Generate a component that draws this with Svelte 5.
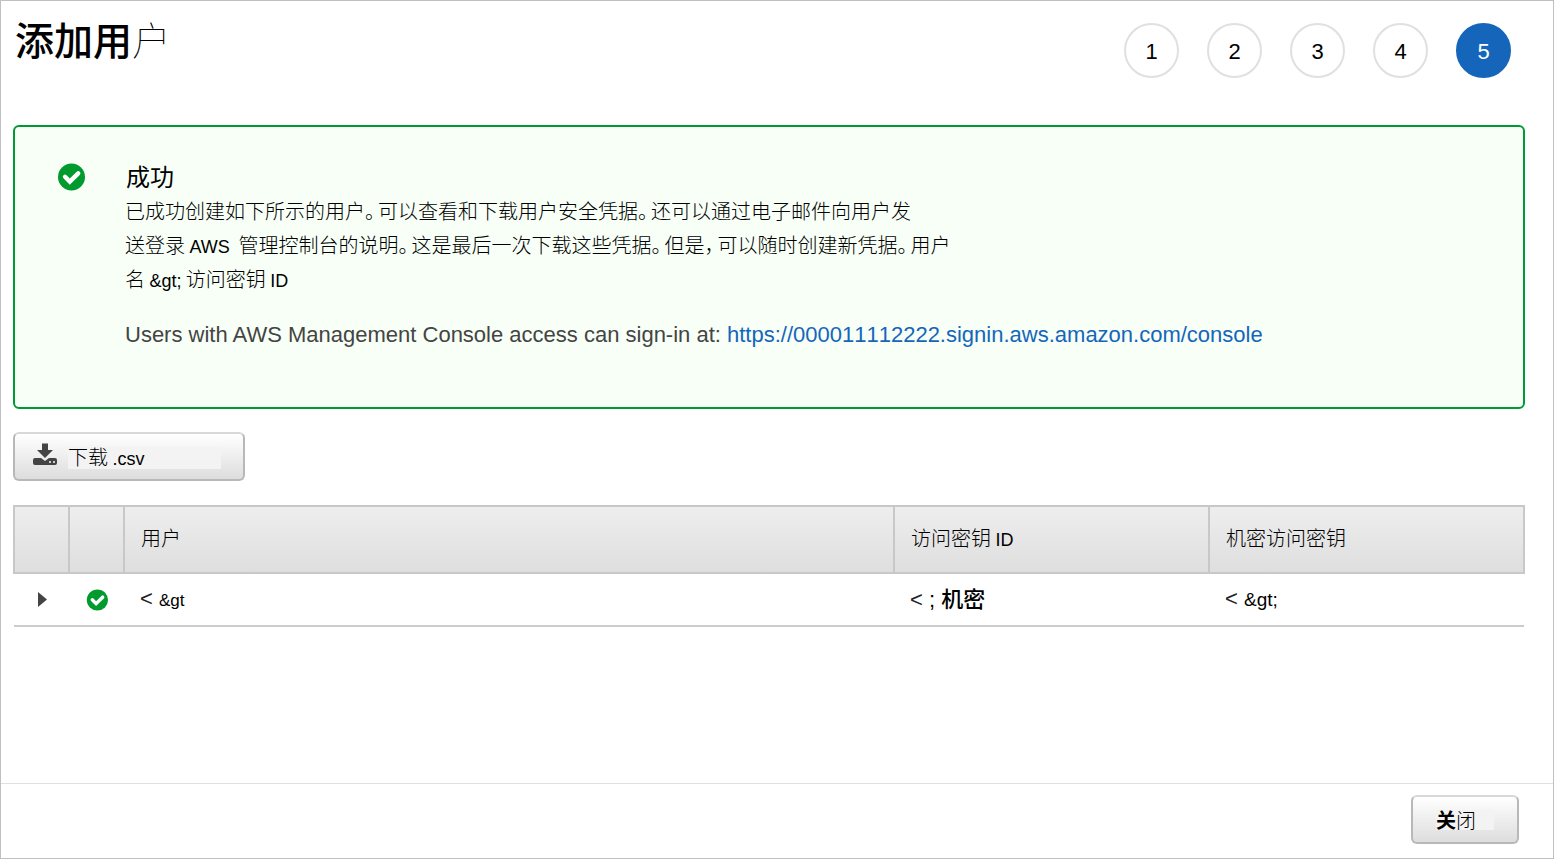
<script>
	const steps = [1, 2, 3, 4, 5];
	let current = 5;
	let open = false;
</script>

{#snippet check()}
	<svg class="check" viewBox="0 0 28 28" aria-hidden="true">
		<circle cx="14.5" cy="14" r="13.5" fill="#009a2e" />
		<path d="M8 13.8 L12.8 18.6 L21.2 10.4" fill="none" stroke="#fff" stroke-width="4.4" stroke-linecap="round" />
	</svg>
{/snippet}

<div class="page">
	<main>
		<header>
			<h1>添加用<span class="thin">户</span></h1>
			<ol class="steps">
				{#each steps as step}
					<li class:active={step === current}>{step}</li>
				{/each}
			</ol>
		</header>

		<section class="alert">
			{@render check()}
			<div class="message">
				<h2>成功</h2>
				<p class="cjk">
					已成功创建如下所示的用户<span class="mark">。</span>可以查看和下载用户安全凭据<span class="mark">。</span>还可以通过电子邮件向用户发<br />
					送登录 <span class="latin">AWS</span>&nbsp; 管理控制台的说明<span class="mark">。</span>这是最后一次下载这些凭据<span class="mark">。</span>但是<span class="mark">，</span>可以随时创建新凭据<span class="mark">。</span>用户<br />
					名 <span class="latin">&amp;gt;</span> 访问密钥 <span class="latin">ID</span>
				</p>
				<p class="signin">
					Users with AWS Management Console access can sign-in at:
					<a href="https://000011112222.signin.aws.amazon.com/console">https://000011112222.signin.aws.amazon.com/console</a>
				</p>
			</div>
		</section>

		<button class="btn download" type="button">
			<svg width="24" height="24" viewBox="0 0 24 24" aria-hidden="true">
				<path d="M9 0.5h6v6.5h5l-8 8-8-8h5z" fill="#444" />
				<path d="M2 15h6l4 3 4-3h6q2 0 2 2v3q0 2-2 2H2q-2 0-2-2v-3q0-2 2-2z" fill="#444" />
				<path d="M16 18h2v2h-2zM20 18h2v2h-2z" fill="#ccc" />
			</svg>
			<span class="label cjk">下载 <span class="latin">.csv</span></span>
		</button>

		<table>
			<colgroup>
				<col class="narrow" />
				<col class="narrow" />
				<col />
				<col class="key" />
				<col class="key" />
			</colgroup>
			<thead>
				<tr>
					<th></th>
					<th></th>
					<th><span class="label cjk">用户</span></th>
					<th><span class="label cjk">访问密钥 <span class="latin">ID</span></span></th>
					<th><span class="label cjk">机密访问密钥</span></th>
				</tr>
			</thead>
			<tbody>
				<tr>
					<td class="icon">
						<button class="toggle" type="button" aria-label="展开" aria-expanded={open} on:click={() => (open = !open)}>
							<svg width="9" height="15" viewBox="0 0 9 15" aria-hidden="true">
								<path d="M0 0 L9 7.5 L0 15z" fill="#444" />
							</svg>
						</button>
					</td>
					<td class="icon">{@render check()}</td>
					<td><span class="lt">&lt;</span> <span class="small">&amp;gt</span></td>
					<td><span class="lt">&lt;</span> <span class="secret">; 机密</span></td>
					<td><span class="lt">&lt;</span> <span class="medium">&amp;gt;</span></td>
				</tr>
			</tbody>
		</table>
	</main>

	<footer>
		<button class="btn close" type="button"><span class="label cjk"><b>关</b>闭</span></button>
	</footer>
</div>

<style>
	:global(body) {
		margin: 0;
		background: #fff;
	}
	.page {
		box-sizing: border-box;
		min-height: 100vh;
		display: flex;
		flex-direction: column;
		border: 1px solid #c0c0c0;
		color: #000;
		font-family: 'Liberation Sans', 'Noto Sans CJK SC', sans-serif;
	}
	main {
		flex: 1;
		padding: 0 28px 0 12px;
	}
	header {
		display: flex;
		justify-content: space-between;
		height: 102px;
		padding: 22px 14px 0 2px;
	}
	h1,
	h2,
	p,
	ol {
		margin: 0;
		padding: 0;
	}
	h1 {
		margin-top: -3px;
		font-size: 39px;
		font-weight: 500;
		line-height: 44px;
	}
	.thin {
		font-weight: 100;
	}
	.steps {
		display: flex;
		gap: 28px;
		list-style: none;
	}
	.steps li {
		box-sizing: border-box;
		width: 55px;
		height: 55px;
		border: 2px solid #e0e0e0;
		border-radius: 50%;
		font-size: 22px;
		line-height: 54px;
		text-align: center;
	}
	.steps li.active {
		border-color: #1566bb;
		background: #1566bb;
		color: #fff;
	}
	.check {
		display: block;
		flex: none;
		width: 28px;
		height: 28px;
	}
	.alert {
		display: flex;
		gap: 40px;
		padding: 36px 42px 58px;
		border: 2px solid #009a33;
		border-radius: 6px;
		background: #f7fff7;
	}
	h2 {
		padding-left: 1px;
		font-size: 24px;
		font-weight: 400;
		line-height: 30px;
	}
	.cjk {
		font-family: 'Noto Sans CJK SC', sans-serif;
		font-size: 20px;
		font-weight: 300;
	}
	.message .cjk {
		padding-top: 1px;
		line-height: 34px;
	}
	.mark {
		padding-right: 3px;
		font-feature-settings: 'halt';
	}
	.latin {
		font-family: 'Liberation Sans', sans-serif;
		font-size: 18px;
		font-weight: 400;
		line-height: 20px;
	}
	.signin {
		margin-top: 25px;
		color: #444;
		font-size: 22px;
		line-height: 28px;
	}
	a {
		color: #1566bb;
		font-kerning: none;
		text-decoration: none;
	}
	.btn {
		box-sizing: border-box;
		display: flex;
		align-items: center;
		height: 49px;
		border: 2px solid #b8b8b8;
		border-top-color: #d8d8d8;
		border-radius: 6px;
		background: linear-gradient(#fff, #ddd);
		color: #000;
	}
	.download {
		width: 232px;
		gap: 11px;
		margin: 23px 0 24px;
		padding: 2px 22px 0 18px;
	}
	.download svg {
		margin-bottom: 6px;
	}
	.btn .label {
		flex: 1;
		background: #f3f3f3;
		line-height: 20px;
		text-align: left;
	}
	.label b {
		font-weight: 700;
	}
	table {
		width: 100%;
		table-layout: fixed;
		border-collapse: collapse;
	}
	.narrow {
		width: 55px;
	}
	.key {
		width: 315px;
	}
	thead tr {
		background: linear-gradient(#eee, #dedede);
	}
	th {
		box-sizing: border-box;
		height: 67px;
		padding: 0 16px;
		border: 2px solid #c8c8c8;
		line-height: 28px;
		text-align: left;
	}
	td {
		height: 51px;
		padding: 0 16px;
		border-bottom: 2px solid #ccc;
		font-size: 22px;
		line-height: 28px;
	}
	td.icon {
		padding: 0 0 0 1px;
	}
	td .check {
		width: 22px;
		height: 22px;
		margin: 0 auto;
	}
	.toggle {
		display: block;
		margin: 0 auto;
		padding: 0;
		border: 0;
		background: none;
		line-height: 0;
	}
	.lt {
		color: #222;
	}
	.small {
		font-size: 17px;
	}
	.medium {
		font-size: 19px;
	}
	.secret {
		font-weight: 500;
	}
	footer {
		display: flex;
		justify-content: flex-end;
		padding: 11px 34px 14px;
		border-top: 1px solid #e0e0e0;
	}
	.close {
		width: 108px;
		padding: 0 23px;
	}
</style>
